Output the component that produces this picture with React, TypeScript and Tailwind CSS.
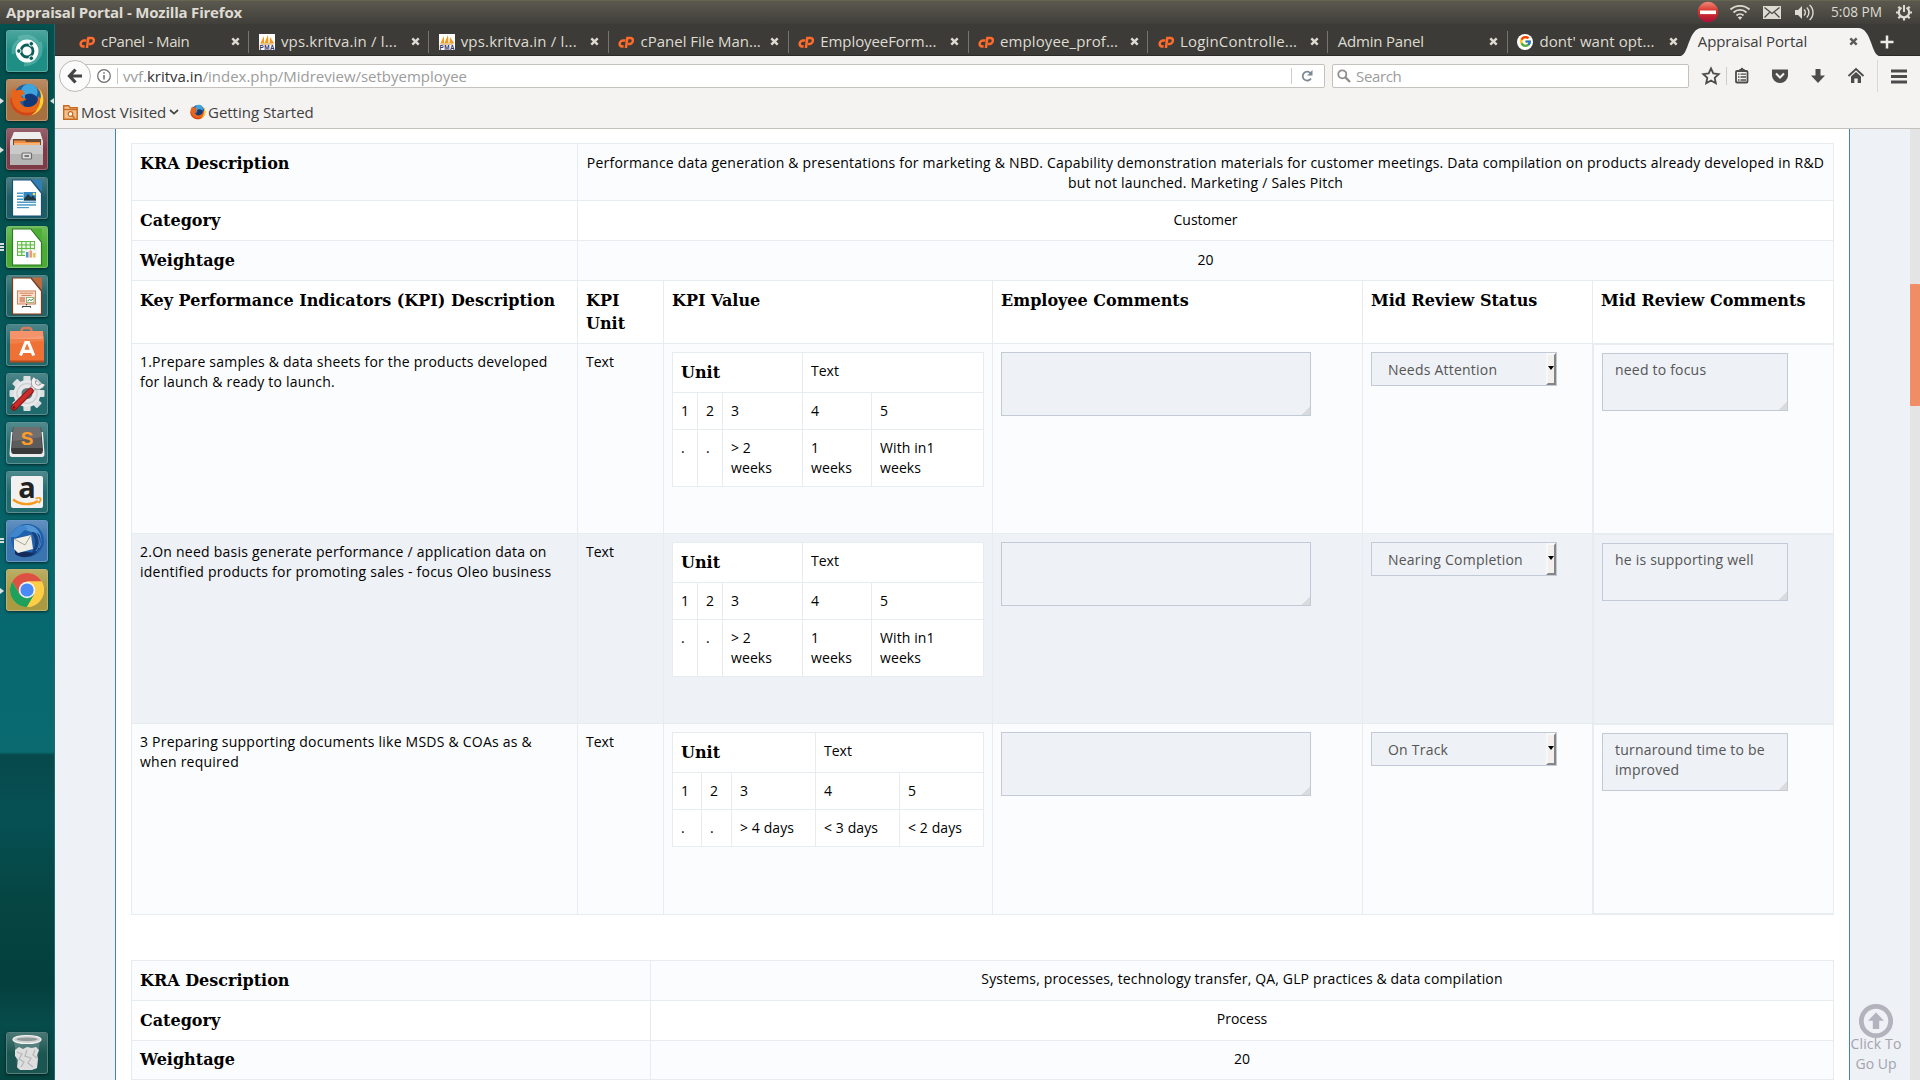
import React from "react";
import { FcGoogle } from "react-icons/fc";

/* ---------- small icons ---------- */

const FirefoxArt = () => (
  <>
    <circle cx="16" cy="15" r="13" fill="#1c5fa5" />
    <circle cx="18" cy="9" r="7.5" fill="#3fa3dc" />
    <path d="M14 12c5-3 11-1 12 5s-5 9-9 8-6-6-3-9z" fill="#123a78" />
    <path d="M26 5c4 4 5.500 9 4.500 14-2 8-9 12-15.500 11.500C6 30 .5 23 .8 15.500 1 11 2.500 7 5 4.500c0 1.500.3 2.500 1 3.500 2-1 4-1.200 6-.5l2 3.500c-2 .2-3 1-3.200 2.500 1 1.500 3 1.500 4.700 1.700-1.500 2-4 2.500-6 2.300 1 4 5 6 9.500 5 5-1 7.500-5 7-9.500 1.500 1 2 2 2.300 3.500C29.500 12 28 8 26 5z" fill="#e8641b" />
    <path d="M26 5c4 4 5.500 9 4.500 14-1.500 6-5.500 9.500-10.500 11 5-4 8-8 7.800-14C29.500 12 28 8 26 5z" fill="#fcd22f" />
    <path d="M2 14c0 8 6 14 14 14 4 0 7-1 9-3-2 4-6 5.600-10 5.500C6 30 .5 23 .8 15.500z" fill="#c9371a" opacity=".7" />
  </>
);

const CpanelIcon = () => (
  <svg viewBox="0 0 16 16" className="h-4 w-4 shrink-0">
    <g fill="none" stroke="#ff6c2c" strokeWidth="2.500" transform="translate(1.600 0) skewX(-8)">
      <path d="M6.800 6.400H4.400a3 3 0 0 0 0 6h1.400" />
      <path d="M8.300 14V4h3a2.900 2.900 0 0 1 0 5.900H9.800" />
    </g>
  </svg>
);

const PmaIcon = () => (
  <svg viewBox="0 0 16 16" className="h-4 w-4 shrink-0 bg-white">
    <path d="M1.500 9 5 2v7zM5.500 9 9 .8 9.500 9zM10.500 9 11 3l4 6z" fill="#f39a1e" />
    <path d="M1 9.500h14l-1 1H2z" fill="#c9872b" />
    <text x="0.400" y="15.600" fontFamily="Liberation Sans" fontWeight="700" fontSize="6.400" textLength="15" fill="#33366b">PMA</text>
  </svg>
);

const CloseX = ({ color }: { color: string }) => (
  <svg viewBox="0 0 9 9" className="h-[9px] w-[9px] shrink-0">
    <path d="M1.300 1.300l6.400 6.400M7.700 1.300L1.300 7.700" stroke={color} strokeWidth="2.400" />
  </svg>
);

/* ---------- title bar ---------- */

const TitleBar = () => (
  <header className="flex h-6 w-full shrink-0 items-center justify-between border-t border-[#67644f] bg-gradient-to-b from-[#5b594f] to-[#403f3a] pl-[6px] text-[#dfdbd2]">
    <span className="mt-[-2px] text-[15px] leading-[22px] font-bold tracking-[-0.200px]">Appraisal Portal - Mozilla Firefox</span>
    <svg viewBox="-12 0 224 23" className="h-[23px] w-[224px]">
      <defs>
        <linearGradient id="stop" x1="0" y1="0" x2="0" y2="1">
          <stop offset="0" stopColor="#f08a78" />
          <stop offset=".45" stopColor="#d8322c" />
          <stop offset="1" stopColor="#a8103a" />
        </linearGradient>
      </defs>
      <circle cx="0" cy="11" r="10.300" fill="url(#stop)" />
      <rect x="-8" y="9.500" width="16" height="3.600" fill="#fff" />
      <g fill="none" stroke="#dfdbd2" strokeWidth="1.800">
        <path d="M22.500 8.500a14 14 0 0 1 19 0" />
        <path d="M25.500 11.500a9.600 9.600 0 0 1 13 0" />
        <path d="M28.500 14.500a5 5 0 0 1 7 0" />
      </g>
      <path d="M29.800 16.300L32 19l2.200-2.700a3.500 3.500 0 0 0-4.400 0z" fill="#dfdbd2" />
      <rect x="55" y="5" width="18" height="13" fill="#dfdbd2" />
      <path d="M56.500 6.500l7.500 6 7.500-6M56.500 16.500l5-5M71.500 16.500l-5-5" fill="none" stroke="#4a4942" strokeWidth="1.300" />
      <path d="M87 9h3l4-4v13l-4-4h-3z" fill="#dfdbd2" />
      <path d="M96 8.500a4 4 0 0 1 0 6M98.800 6.500a7 7 0 0 1 0 10M101.600 4a10 10 0 0 1 0 15" fill="none" stroke="#dfdbd2" strokeWidth="1.400" />
      <text x="123" y="16.200" fontFamily="Open Sans" fontSize="14.500" textLength="51" lengthAdjust="spacingAndGlyphs" fill="#dfdbd2">5:08 PM</text>
      <g stroke="#dfdbd2" fill="none" transform="translate(196 11)">
        <path d="M-2.500-4.400a5.200 5.200 0 1 0 5 0" strokeWidth="2.200" />
        <path d="M0-7V0" strokeWidth="2" />
        <path d="M-8 .5h3M5 .5h3M0 5v3.500M-5.700 6.200l2-2M5.700 6.200l-2-2M-5.700-5.200l1.500 1.500M5.700-5.200L4.200-3.700" strokeWidth="2.200" />
      </g>
    </svg>
  </header>
);

/* ---------- launcher ---------- */

const tileBase = "relative flex h-[42px] w-[42px] shrink-0 items-center justify-center rounded-[3px] border border-white/25 shadow-[0_1px_3px_rgba(0,0,0,0.6)]";

const Doc = ({ edge, fold, children }: { edge: string; fold: string; children: React.ReactNode }) => (
  <>
    <path d="M6.500 3h18.500l10.500 13v23h-29z" fill="#fff" stroke={edge} strokeWidth="1.200" />
    <path d="M26 2.500h10v12.500z" fill={fold} />
    {children}
  </>
);

const UbuntuLogo = () => (
  <>
    <path d="M7 24C6 10 20 4 32 12M34 12c4 12-3 22-16 23M12 8c14-6 24 4 22 18" fill="none" stroke="#8fd6cd" strokeOpacity=".35" strokeWidth="3" />
    <circle cx="21" cy="21" r="11.500" fill="#fff" />
    <circle cx="21" cy="21" r="6" fill="none" stroke="#0b5f5b" strokeWidth="2.800" />
    <g fill="#0b5f5b" stroke="#fff" strokeWidth="1">
      <circle cx="12.800" cy="21" r="2.300" />
      <circle cx="25.300" cy="13.800" r="2.300" />
      <circle cx="25.300" cy="28.200" r="2.300" />
    </g>
  </>
);

const FilesArt = () => (
  <>
    <path d="M8 4h26l3 9v23H4V13z" fill="#d8d8d8" />
    <path d="M8 4h26l2 7H6z" fill="#eee" />
    <path d="M7 11h28v7H7z" fill="#6b4a35" />
    <path d="M8 12.500h11l1 1.500h14v4H8z" fill="#f08a3c" />
    <path d="M8 15.500h26v1H8z" fill="#fbd9b0" />
    <path d="M4 17h33v20H4z" fill="#b5b5b5" />
    <path d="M4 17h33v9H4z" fill="#cacaca" />
    <rect x="16" y="25" width="9.500" height="6" rx="1" fill="#ddd" stroke="#6e6e6e" strokeWidth="1.200" />
    <rect x="18.500" y="27" width="4.500" height="2" fill="#777" />
  </>
);

const WriterArt = () => (
  <Doc edge="#17507e" fold="#2f7fb5">
    <g fill="#4b9bc7">
      <rect x="11" y="15.500" width="6" height="1.500" />
      <rect x="11" y="18.500" width="6" height="1.500" />
      <rect x="11" y="21.500" width="6" height="1.500" />
      <rect x="11" y="24.500" width="19" height="1.500" />
      <rect x="11" y="27.200" width="19" height="1.500" />
      <rect x="11" y="30" width="12" height="1.200" />
    </g>
    <rect x="17.500" y="15" width="12.500" height="8.500" fill="#3187c4" />
    <path d="M18 22l4-5 3 3 2-1.500 3 4v1H18z" fill="#1f3a3f" />
    <circle cx="28" cy="17" r="1.300" fill="#ffe14a" />
  </Doc>
);

const CalcArt = () => (
  <Doc edge="#2b7d1f" fold="#4fae36">
    <rect x="11" y="15" width="18" height="15" fill="#5cb944" />
    <g fill="#eefbe9">
      {[0, 1, 2, 3].map((r) =>
        [0, 1, 2, 3].map((c) => <rect key={`${r}${c}`} x={12 + c * 4.300} y={16 + r * 3.500} width="3.200" height="2.400" />)
      )}
    </g>
    <rect x="19" y="23.500" width="11.500" height="8" fill="#f4f4f4" />
    <rect x="20" y="26" width="2.500" height="5.500" fill="#4d97d6" />
    <rect x="23.500" y="24.500" width="2.500" height="7" fill="#f09a72" />
    <rect x="27" y="27" width="2.500" height="4.500" fill="#efc04a" />
  </Doc>
);

const ImpressArt = () => (
  <Doc edge="#8c3510" fold="#bf6a3c">
    <rect x="11.500" y="16" width="18" height="13" fill="#fbe4d6" stroke="#d7845a" strokeWidth="1.100" />
    <path d="M13.500 18.200h14M15.500 20.400h10" stroke="#cf7a50" strokeWidth="1" />
    <rect x="13.500" y="22" width="5.500" height="5.500" fill="#e0987a" />
    <rect x="20.500" y="22.500" width="7.500" height="5" fill="#fff" stroke="#76a968" strokeWidth=".8" />
    <path d="M21.500 26l2-1.500 1.500 1 2.500-2" stroke="#3f8a3a" fill="none" />
    <path d="M20.500 29v1.500M16 31.500h9M17.500 31l-1.500 1.500M23.500 31l1.500 1.500" stroke="#444" strokeWidth="1.200" />
  </Doc>
);

const SoftwareArt = () => (
  <>
    <path d="M15.500 11V7q0-3 3-3h4q3 0 3 3v4" fill="none" stroke="#d9775c" strokeWidth="2.400" />
    <path d="M4 7h33l1 9v22H4z" fill="#ef7136" />
    <path d="M4 7h33v8H4z" fill="#f4926a" />
    <path d="M4 15l34-3v5L4 20z" fill="#fff" opacity=".1" />
    <path d="M14.500 31.500l5.300-13h2.600l5.300 13M15.500 27.300h11.500" fill="none" stroke="#fff" strokeWidth="3.200" />
    <path d="M4 36.500h34v2H4z" fill="#b84a1c" />
  </>
);

const SettingsArt = () => (
  <>
    <g transform="translate(21 20.500)">
      {[0, 45, 90, 135, 180, 225, 270, 315].map((a) => (
        <rect key={a} x="-3.600" y="-17.500" width="7.200" height="8" rx="1" fill="#dcdfe0" transform={`rotate(${a})`} />
      ))}
      <circle r="13.500" fill="#e6e8e9" />
      <circle r="10" fill="none" stroke="#cfd2d3" strokeWidth="1.500" />
      <circle r="5.500" fill="#5a7d80" />
    </g>
    <path d="M26 16l6.500-6.500" stroke="#8d8d8d" strokeWidth="5.500" />
    <path d="M26 16l6.500-6.500" stroke="#ececec" strokeWidth="4" />
    <path d="M29 5.500a5 5 0 1 0 8 5.500" fill="none" stroke="#8d8d8d" strokeWidth="4.800" />
    <path d="M29 5.500a5 5 0 1 0 8 5.500" fill="none" stroke="#f0f0f0" strokeWidth="3.400" />
    <path d="M8 34.500L24.500 18" stroke="#7f1414" strokeWidth="6.400" strokeLinecap="round" />
    <path d="M8 34.300L24.500 17.800" stroke="#cc2b2b" strokeWidth="4.600" strokeLinecap="round" />
    <circle cx="8" cy="34.500" r="1.200" fill="#701010" />
  </>
);

const SublimeArt = () => (
  <>
    <path d="M5 10h32l1.500 22q0 3-2.500 3H6q-2.500 0-2.500-3z" fill="#ececec" />
    <path d="M7 5h28l2 23q0 3-2 4H7q-2-1-2-4z" fill="#3a3a3a" />
    <path d="M7.500 5h27l1.500 21H6z" fill="#5c5c5c" />
    <path d="M7.500 5h27l1 10-29 4z" fill="#777" opacity=".7" />
    <text x="21" y="22.500" textAnchor="middle" fontFamily="Liberation Sans" fontWeight="700" fontSize="19" fill="#ff9b28">S</text>
  </>
);

const AmazonArt = () => (
  <>
    <rect x="5" y="5" width="32" height="32" rx="2" fill="#f1f1f1" />
    <text x="21" y="27" textAnchor="middle" fontFamily="Open Sans" fontWeight="700" fontSize="29" fill="#222">a</text>
    <path d="M7 28.500c8 6 18 6 25 1.500" fill="none" stroke="#f79a1c" strokeWidth="2.200" />
    <path d="M29.500 27.500c3-1 4.500-1 5 0s-.5 3-2 4.500" fill="none" stroke="#f79a1c" strokeWidth="1.800" />
  </>
);

const ThunderbirdArt = () => (
  <>
    <path d="M5 20C4 12 11 4 21 4c10 0 17 7 17 17 0 9-8 16-16 16-7 0-13-4-15-9z" fill="#2161ab" />
    <path d="M12 8c6-5 17-4 21 4 4 6 3 15-2 20 3-8 1-15-6-20-4-2-9-3-13-4z" fill="#6eb4ea" opacity=".65" />
    <path d="M9 34c5 4 15 5 22-2-5 1-12 1-22-3z" fill="#132c5c" />
    <path d="M8 19l17-4 2 14-15 4-4-4z" fill="#f2efe6" />
    <path d="M8 19l11 6 6-10" fill="none" stroke="#aca68f" strokeWidth="1" />
    <path d="M3 17c3-3 6-9 10-11 3-1 7 0 9 3-5 0-6 6-12 8z" fill="#3f86cf" />
    <path d="M25 12c5 5 6 14 0 22 8-1 12-8 11-16-2-4-6-6-11-6z" fill="#17407e" />
    <path d="M29 12c5 5 6 13 1 19M32 12c4 5 4 11 1 16" fill="none" stroke="#4d93d6" strokeWidth="1" />
  </>
);

const ChromeArt = () => (
  <g transform="translate(21 21)">
    <circle r="17" fill="#fbc948" />
    <path d="M0-8.500H14.720A17 17 0 0 0-14.720-8.500L-7.500 4.200z" fill="#dd5144" />
    <path d="M-14.720-8.500A17 17 0 0 0 0 17L7.400 4.200-7.400 4.200z" fill="#1fa15d" />
    <path d="M14.720-8.500A17 17 0 0 1 0 17L7.500 4.200 0-8.500z" fill="#ffcd46" />
    <circle r="8.300" fill="#f1f1f1" />
    <circle r="6.600" fill="#4a8af4" />
  </g>
);

const TrashArt = () => (
  <>
    <path d="M8 8h26l-3.500 29h-19z" fill="#e8efee" opacity=".22" />
    <path d="M9 18l4-3 4 2 4-2 5 1 4-1 3 3-2 5 1 4-1 9-5 2H14l-3-3 1-7-3-4z" fill="#dedede" />
    <path d="M11 20l5 2-3 5 5 3-3 5M21 18l-2 6 6 2-3 5 5 4M29 18l-2 5 4 3" stroke="#b8b8b8" fill="none" strokeWidth="1.300" />
    <ellipse cx="21" cy="7.500" rx="14" ry="4" fill="#cfd2d1" stroke="#f3f3f3" strokeWidth="1.200" />
    <ellipse cx="21" cy="7.200" rx="10.500" ry="1.800" fill="#8f9a98" />
  </>
);

type Mark = "none" | "arrow" | "both" | "double" | "triple";
const LAUNCHER: { name: string; bg: string; mark: Mark; art: React.ReactNode }[] = [
  { name: "Dash", bg: "bg-[#1f8f86]", mark: "none", art: <UbuntuLogo /> },
  { name: "Firefox", bg: "bg-[#a9703f]", mark: "both", art: <g transform="translate(3.500 3) scale(1.100)"><FirefoxArt /></g> },
  { name: "Files", bg: "bg-[#7d3a47]", mark: "arrow", art: <FilesArt /> },
  { name: "Writer", bg: "bg-[#1d5d64]", mark: "none", art: <WriterArt /> },
  { name: "Calc", bg: "bg-[#4bab35]", mark: "triple", art: <CalcArt /> },
  { name: "Impress", bg: "bg-[#226467]", mark: "none", art: <ImpressArt /> },
  { name: "Software", bg: "bg-[#20686c]", mark: "none", art: <SoftwareArt /> },
  { name: "Settings", bg: "bg-[#20696d]", mark: "none", art: <SettingsArt /> },
  { name: "Sublime", bg: "bg-[#276e71]", mark: "none", art: <SublimeArt /> },
  { name: "Amazon", bg: "bg-[#216b6f]", mark: "none", art: <AmazonArt /> },
  { name: "Thunderbird", bg: "bg-[#3a75b0]", mark: "double", art: <ThunderbirdArt /> },
  { name: "Chrome", bg: "bg-[#aa9a41]", mark: "arrow", art: <ChromeArt /> },
];

const Tile = ({ bg, mark, art }: { bg: string; mark: Mark; art: React.ReactNode }) => (
  <div className={`${tileBase} ${bg}`}>
    <span className="absolute inset-x-0 top-0 h-1/2 rounded-t-[3px] bg-gradient-to-b from-white/20 to-white/0" />
    <svg viewBox="0 0 42 42" className="relative h-[42px] w-[42px] shrink-0 overflow-visible">{art}</svg>
    {(mark === "arrow" || mark === "both") && (
      <svg viewBox="0 0 4 6" className="absolute top-[18px] left-[-7px] h-[6px] w-[4px]"><path d="M0 0l4 3-4 3z" fill="#e0e0e0" /></svg>
    )}
    {mark === "both" && (
      <svg viewBox="0 0 4 6" className="absolute top-[18px] right-[-7px] h-[6px] w-[4px]"><path d="M4 0L0 3l4 3z" fill="#e0e0e0" /></svg>
    )}
    {(mark === "triple" || mark === "double") && (
      <span className={`absolute left-[-7px] w-[4px] ${mark === "triple" ? "top-[16px]" : "top-[17px]"}`}>
        <span className="mb-[1px] block h-[2px] bg-[#d8dede]" />
        <span className="mb-[1px] block h-[2px] bg-[#d8dede]" />
        {mark === "triple" && <span className="block h-[2px] bg-[#d8dede]" />}
      </span>
    )}
  </div>
);

const Launcher = () => (
  <aside className="flex w-[55px] shrink-0 flex-col justify-between border-r border-[#1d6a72] bg-[linear-gradient(180deg,#04504f_0px,#04504f_180px,#065b5e_380px,#076970_600px,#0a6a70_728px,#07494b_731px,#065054_790px,#054542_880px,#04403d_960px,#064c4b_1000px,#05433f_1056px)] pt-[6px] pb-[6px] pl-[6px]">
    <div className="flex flex-col gap-[7px]">
      {LAUNCHER.map((l) => (
        <Tile key={l.name} bg={l.bg} mark={l.mark} art={l.art} />
      ))}
    </div>
    <Tile bg="bg-[#1c5652]" mark="none" art={<TrashArt />} />
  </aside>
);

/* ---------- tabs ---------- */

type TabData = { icon: "cp" | "pma" | "google" | "none"; label: string; tracking: string };
const TABS: TabData[] = [
  { icon: "cp", label: "cPanel - Main", tracking: "tracking-[-0.400px]" },
  { icon: "pma", label: "vps.kritva.in / l...", tracking: "tracking-[0.180px]" },
  { icon: "pma", label: "vps.kritva.in / l...", tracking: "tracking-[0.180px]" },
  { icon: "cp", label: "cPanel File Man...", tracking: "tracking-[0px]" },
  { icon: "cp", label: "EmployeeForm...", tracking: "tracking-[-0.080px]" },
  { icon: "cp", label: "employee_prof...", tracking: "tracking-[0.100px]" },
  { icon: "cp", label: "LoginControlle...", tracking: "tracking-[0.200px]" },
  { icon: "none", label: "Admin Panel", tracking: "tracking-[-0.180px]" },
  { icon: "google", label: "dont' want opt...", tracking: "tracking-[0.080px]" },
];

const TabIcon = ({ icon }: { icon: TabData["icon"] }) => {
  if (icon === "cp") return <CpanelIcon />;
  if (icon === "pma") return <PmaIcon />;
  if (icon === "google")
    return (
      <span className="flex h-4 w-4 shrink-0 items-center justify-center rounded-full bg-white">
        <FcGoogle className="h-[13px] w-[13px]" />
      </span>
    );
  return null;
};

const TabBar = () => (
  <div className="flex h-8 shrink-0 border-b border-[#2b2a27] bg-[#3c3b37] pl-[14.600px] text-[15px] tracking-[-0.2px] text-[#dfdbd2]">
    {TABS.map((t, i) => (
      <div key={i} className="relative flex w-[179.800px] shrink-0 items-center gap-[6px] pt-[4px] pr-[9.500px] pl-[9.500px]">
        <TabIcon icon={t.icon} />
        <span className={`flex-1 whitespace-nowrap ${t.tracking}`}>{t.label}</span>
        <CloseX color="#dfdbd2" />
        {i < 8 && <span className="absolute top-[7px] right-0 h-[22px] w-px bg-[#77756f]" />}
      </div>
    ))}
    <div className="relative mt-[4px] ml-[-8px] h-[28px] w-[200px] shrink-0">
      <svg viewBox="0 0 200 28" className="absolute inset-0 h-[28px] w-[200px]">
        <path d="M0 28C9 28 8 0 22 0H178C192 0 191 28 200 28Z" fill="#f4f3f2" />
      </svg>
      <div className="relative flex h-[27px] items-center justify-between pr-[21.500px] pl-[18px] tracking-[-0.100px] text-[#3c3c3c]">
        <span>Appraisal Portal</span>
        <CloseX color="#5b5b5b" />
      </div>
    </div>
    <svg viewBox="0 0 14 14" className="mt-[11px] h-[14px] w-[14px]"><path d="M7 .5v13M.5 7h13" stroke="#eeece8" strokeWidth="2.500" /></svg>
  </div>
);

/* ---------- navigation ---------- */

const NavBar = () => (
  <div className="flex h-10 shrink-0 items-center bg-[#f4f3f2] text-[14px]">
    <div className="z-10 ml-[4px] flex h-8 w-8 shrink-0 items-center justify-center rounded-full border border-[#bdb9b5] bg-[#fbfbfb]">
      <svg viewBox="0 0 16 16" className="h-4 w-4"><path d="M8.500 1.500L2.500 8l6 6.500M3 8h12" fill="none" stroke="#444" strokeWidth="3.200" /></svg>
    </div>
    <div className="ml-[-8px] flex h-6 w-[1242px] shrink-0 items-center rounded-r-[2px] border border-[#c5c1bd] bg-white pl-[13px] text-[#9c9c9c]">
      <svg viewBox="0 0 14 14" className="h-[14px] w-[14px]">
        <circle cx="7" cy="7" r="6.300" fill="none" stroke="#6b6b6b" strokeWidth="1.200" />
        <path d="M7 6v4.500M7 3.200v1.600" stroke="#6b6b6b" strokeWidth="1.500" />
      </svg>
      <span className="mr-[5px] ml-[6px] h-4 w-px bg-[#c9c7c5]" />
      <span className="flex-1 text-[15px] leading-[20px] tracking-[-0.020px] whitespace-nowrap">
        vvf.<span className="text-[#333]">kritva.in</span>/index.php/Midreview/setbyemployee
      </span>
      <span className="h-4 w-px bg-[#cfcdcb]" />
      <svg viewBox="0 0 14 14" className="mr-[10px] ml-[8px] h-[14px] w-[14px]">
        <path d="M10.500 4A4.500 4.500 0 1 0 11 9.500" fill="none" stroke="#7c8893" strokeWidth="1.800" />
        <path d="M12.500 1v5.500H7z" fill="#7c8893" />
      </svg>
    </div>
    <div className="ml-[7px] flex h-6 w-[357px] shrink-0 items-center rounded-[2px] border border-[#c5c1bd] bg-white pl-[4px] text-[#9c9c9c]">
      <svg viewBox="0 0 14 14" className="mr-[5px] h-[14px] w-[14px]">
        <circle cx="5.300" cy="5.300" r="4" fill="none" stroke="#8e8e8e" strokeWidth="1.800" />
        <path d="M8.200 8.200l4.800 4.800" stroke="#8e8e8e" strokeWidth="2.400" />
      </svg>
      <span className="text-[15px] tracking-[-0.350px]">Search</span>
    </div>
    <svg viewBox="1 0 231 40" className="h-10 w-[231px] shrink-0 text-[#4c4c4c]">
      <path d="M23 12.500l2.300 5 5.400.6-4 3.700 1.100 5.400-4.800-2.700-4.800 2.700 1.100-5.400-4-3.700 5.400-.6z" fill="none" stroke="currentColor" strokeWidth="1.800" />
      <path d="M38.500 11v18" stroke="#d0cecb" />
      <rect x="45.500" y="15" width="11.500" height="11.500" rx="1" fill="#f4f3f2" stroke="currentColor" strokeWidth="1.800" transform="translate(2.500 0)" />
      <path d="M50.500 15.500l1-2.500h1.200a1.300 1.300 0 0 1 2.600 0h1.200l1 2.500z" fill="currentColor" />
      <path d="M50 18.200h1.500M52.500 18.200H58M50 21h1.500M52.500 21H58M50 24h1.500M52.500 24H58" stroke="currentColor" strokeWidth="1.300" />
      <path d="M84 13.500h16v6a8 7.500 0 0 1-16 0z" fill="currentColor" />
      <path d="M88 17.500l4 4 4-4" fill="none" stroke="#f4f3f2" strokeWidth="2" />
      <path d="M127.500 13h5v6.500h4.500L130 27l-7-7.500h4.500z" fill="currentColor" />
      <path d="M160.500 20l7.500-7 7.500 7" fill="none" stroke="currentColor" strokeWidth="1.800" />
      <path d="M163 20.500l5-4.500 5 4.500V27h-3.300v-4.500h-3.400V27H163z" fill="currentColor" />
      <path d="M189.500 4v32" stroke="#dad8d5" />
      <path d="M203 15h16M203 20.500h16M203 26h16" stroke="currentColor" strokeWidth="3" />
    </svg>
  </div>
);

const BookmarksBar = () => (
  <div className="flex h-[33px] shrink-0 items-center border-b border-[#c4c0bc] bg-[#f4f3f2] pl-[8px] text-[15px] tracking-[-0.020px] text-[#3f3f3f]">
    <svg viewBox="0 0 15 15" className="h-[15px] w-[15px]">
      <path d="M.7.7h5l1.500 2h7v11.600H.7z" fill="#f3c08a" stroke="#c9691f" strokeWidth="1.400" />
      <path d="M.7 4.500h13.600" stroke="#c9691f" strokeWidth="1.300" />
      <circle cx="7.500" cy="9" r="2.300" fill="#fff" stroke="#c9691f" strokeWidth="1.200" />
      <path d="M9.200 10.700l2.500 2.500" stroke="#c9691f" strokeWidth="1.400" />
    </svg>
    <span className="ml-[3px] w-[88px] whitespace-nowrap">Most Visited</span>
    <svg viewBox="0 0 10 6" className="h-[6px] w-[10px]"><path d="M1 1l4 3.600L9 1" fill="none" stroke="#444" strokeWidth="1.700" /></svg>
    <svg viewBox="0 0 32 32" className="ml-[11px] h-4 w-4"><FirefoxArt /></svg>
    <span className="ml-[2px] whitespace-nowrap">Getting Started</span>
  </div>
);

/* ---------- review tables ---------- */

const cell = "border-t border-l border-[#e7ecf1] p-2 align-top";
const wideCell = "border-t border-l border-[#e7ecf1] px-2 pt-[9px] pb-[7px] text-center align-top";
const head = "border-t border-l border-[#e7ecf1] p-2 text-left align-top font-['DejaVu_Serif'] text-[16px] leading-[23px] font-bold";
const tableBase = "table-fixed border-separate border-spacing-0 border-r border-b border-[#e7ecf1]";
const field = "resize-none overflow-hidden border border-[#c2cad8] bg-[#eef1f5] px-[12px] py-[6px] tracking-[0.200px] text-[#555]";

const Grip = () => (
  <svg viewBox="0 0 8 8" className="absolute right-px bottom-px h-2 w-2">
    <path d="M8 0v8H0V7h1V6h1V5h1V4h1V3h1V2h1V1h1V0z" fill="#d9dbdd" />
  </svg>
);

type ScoreData = { cols: number[]; values: string[] };
const WEEKS: ScoreData = { cols: [25, 25, 80, 69, 112], values: [".", ".", "> 2 weeks", "1 weeks", "With in1 weeks"] };
const DAYS: ScoreData = { cols: [29, 30, 84, 84, 84], values: [".", ".", "> 4 days", "< 3 days", "< 2 days"] };

const ScoreTable = ({ cols, values }: ScoreData) => (
  <table className={`${tableBase} w-[312px] bg-white`}>
    <colgroup>
      {cols.map((w, i) => (
        <col key={i} style={{ width: w }} />
      ))}
    </colgroup>
    <tbody>
      <tr className="h-10">
        <th colSpan={3} className={head}>Unit</th>
        <td colSpan={2} className={cell}>Text</td>
      </tr>
      <tr className="h-[37px]">
        {[1, 2, 3, 4, 5].map((n) => (
          <td key={n} className={cell}>{n}</td>
        ))}
      </tr>
      <tr>
        {values.map((v, i) => (
          <td key={i} className={`${cell} tracking-[0.100px]`}>{v}</td>
        ))}
      </tr>
    </tbody>
  </table>
);

const ROWS = [
  { text: "1.Prepare samples & data sheets for the products developed for launch & ready to launch.", tracking: "tracking-[0.210px]", score: WEEKS, status: "Needs Attention", comment: "need to focus", row: "h-[190px] bg-[#fbfcfd]", last: "" },
  { text: "2.On need basis generate performance / application data on identified products for promoting sales - focus Oleo business", tracking: "tracking-[0.240px]", score: WEEKS, status: "Nearing Completion", comment: "he is supporting well", row: "h-[190px] bg-[#eef1f5]", last: "" },
  { text: "3 Preparing supporting documents like MSDS & COAs as & when required", tracking: "tracking-[0.230px]", score: DAYS, status: "On Track", comment: "turnaround time to be improved", row: "h-[191px] bg-[#fbfcfd]", last: "border-b" },
];

const StatusSelect = ({ value }: { value: string }) => (
  <div className="flex h-[34px] w-[186px] border border-[#c2cad8] bg-[#eef1f5] pl-4 tracking-[0.220px] text-[#555]">
    <span className="flex-1 pt-[7px]">{value}</span>
    <span className="flex w-[10px] items-center justify-center border-t-2 border-r-2 border-b-2 border-l-2 border-t-[#f8f8f8] border-r-[#868686] border-b-[#868686] border-l-[#f8f8f8] bg-[#f1f0ee]">
      <svg viewBox="0 0 6 4" className="mt-[-2px] h-1 w-[6px] shrink-0"><path d="M0 0h6L3 4z" fill="#000" /></svg>
    </span>
  </div>
);

const KpiTable = () => (
  <table className={`${tableBase} w-[1703px]`}>
    <colgroup>
      <col className="w-[446px]" />
      <col className="w-[86px]" />
      <col className="w-[329px]" />
      <col className="w-[370px]" />
      <col className="w-[230px]" />
      <col className="w-[241px]" />
    </colgroup>
    <tbody>
      <tr className="h-[57px] bg-[#fbfcfd]">
        <th className={head}>KRA Description</th>
        <td colSpan={5} className={`${wideCell} tracking-[0.205px]`}>
          Performance data generation &amp; presentations for marketing &amp; NBD. Capability demonstration materials for customer meetings. Data compilation on products already developed in R&amp;D but not launched. Marketing / Sales Pitch
        </td>
      </tr>
      <tr className="h-10">
        <th className={head}>Category</th>
        <td colSpan={5} className={wideCell}>Customer</td>
      </tr>
      <tr className="h-10 bg-[#fbfcfd]">
        <th className={head}>Weightage</th>
        <td colSpan={5} className={wideCell}>20</td>
      </tr>
      <tr className="h-[63px]">
        {["Key Performance Indicators (KPI) Description", "KPI Unit", "KPI Value", "Employee Comments", "Mid Review Status", "Mid Review Comments"].map((h) => (
          <th key={h} className={head}>{h}</th>
        ))}
      </tr>
      {ROWS.map((r) => (
        <tr key={r.status} className={r.row}>
          <td className={`${cell} ${r.tracking}`}>{r.text}</td>
          <td className={cell}>Text</td>
          <td className={cell}><ScoreTable cols={r.score.cols} values={r.score.values} /></td>
          <td className={cell}>
            <div className="relative h-[64px] w-[310px]">
              <textarea readOnly className={`${field} block h-full w-full`} />
              <Grip />
            </div>
          </td>
          <td className={cell}><StatusSelect value={r.status} /></td>
          <td className={`border-t-2 border-l-2 border-[#e7ecf1] p-2 align-top ${r.last}`}>
            <div className="relative h-[58px] w-[186px]">
              <textarea readOnly value={r.comment} className={`${field} block h-full w-full`} />
              <Grip />
            </div>
          </td>
        </tr>
      ))}
    </tbody>
  </table>
);

const SummaryTable = () => (
  <table className={`${tableBase} mt-[45px] w-[1703px]`}>
    <colgroup>
      <col className="w-[519px]" />
      <col className="w-[1183px]" />
    </colgroup>
    <tbody>
      <tr className="h-10 bg-[#fbfcfd]">
        <th className={head}>KRA Description</th>
        <td className={`${cell} text-center tracking-[0.140px]`}>Systems, processes, technology transfer, QA, GLP practices &amp; data compilation</td>
      </tr>
      <tr className="h-10">
        <th className={head}>Category</th>
        <td className={`${cell} text-center`}>Process</td>
      </tr>
      <tr className="h-[39px] bg-[#fbfcfd]">
        <th className="border-t border-l border-[#e7ecf1] px-2 pt-[7px] pb-2 text-left align-top font-['DejaVu_Serif'] text-[16px] leading-[23px] font-bold">Weightage</th>
        <td className={`${cell} text-center`}>20</td>
      </tr>
    </tbody>
  </table>
);

const Page = () => (
  <main className="relative flex min-h-0 flex-1 bg-[#eef1f6] pl-[60px] text-[14px] leading-5 text-black">
    <div className="w-[1735px] shrink-0 overflow-hidden border-x border-[#4682b4] bg-white pt-[14px] pl-[15px]">
      <KpiTable />
      <SummaryTable />
    </div>
    <div className="ml-auto w-[10px] shrink-0 bg-[#e4e4e4] pt-[155px]">
      <div className="h-[122px] rounded-[1px] bg-[#f08c66]" />
    </div>
    <div className="absolute right-[14px] bottom-[6px] flex w-[60px] flex-col items-center text-center text-[#a3a3ad]">
      <svg viewBox="0 0 36 36" className="mb-[-5px] h-[36px] w-[36px]">
        <circle cx="18" cy="18" r="14.700" fill="none" stroke="#b3b3be" strokeWidth="4.800" />
        <path d="M18 9.500l8 8.300h-4.800v8.200h-6.400v-8.200H10z" fill="#b3b3be" />
      </svg>
      <span className="tracking-[0.150px] whitespace-nowrap">Click To</span>
      <span>Go Up</span>
    </div>
  </main>
);

export default function App() {
  return (
    <div className="flex h-[1080px] w-[1920px] flex-col overflow-hidden font-['Open_Sans','Noto_Sans',sans-serif]">
      <TitleBar />
      <div className="flex min-h-0 flex-1">
        <Launcher />
        <div className="flex min-w-0 flex-1 flex-col">
          <TabBar />
          <NavBar />
          <BookmarksBar />
          <Page />
        </div>
      </div>
    </div>
  );
}
